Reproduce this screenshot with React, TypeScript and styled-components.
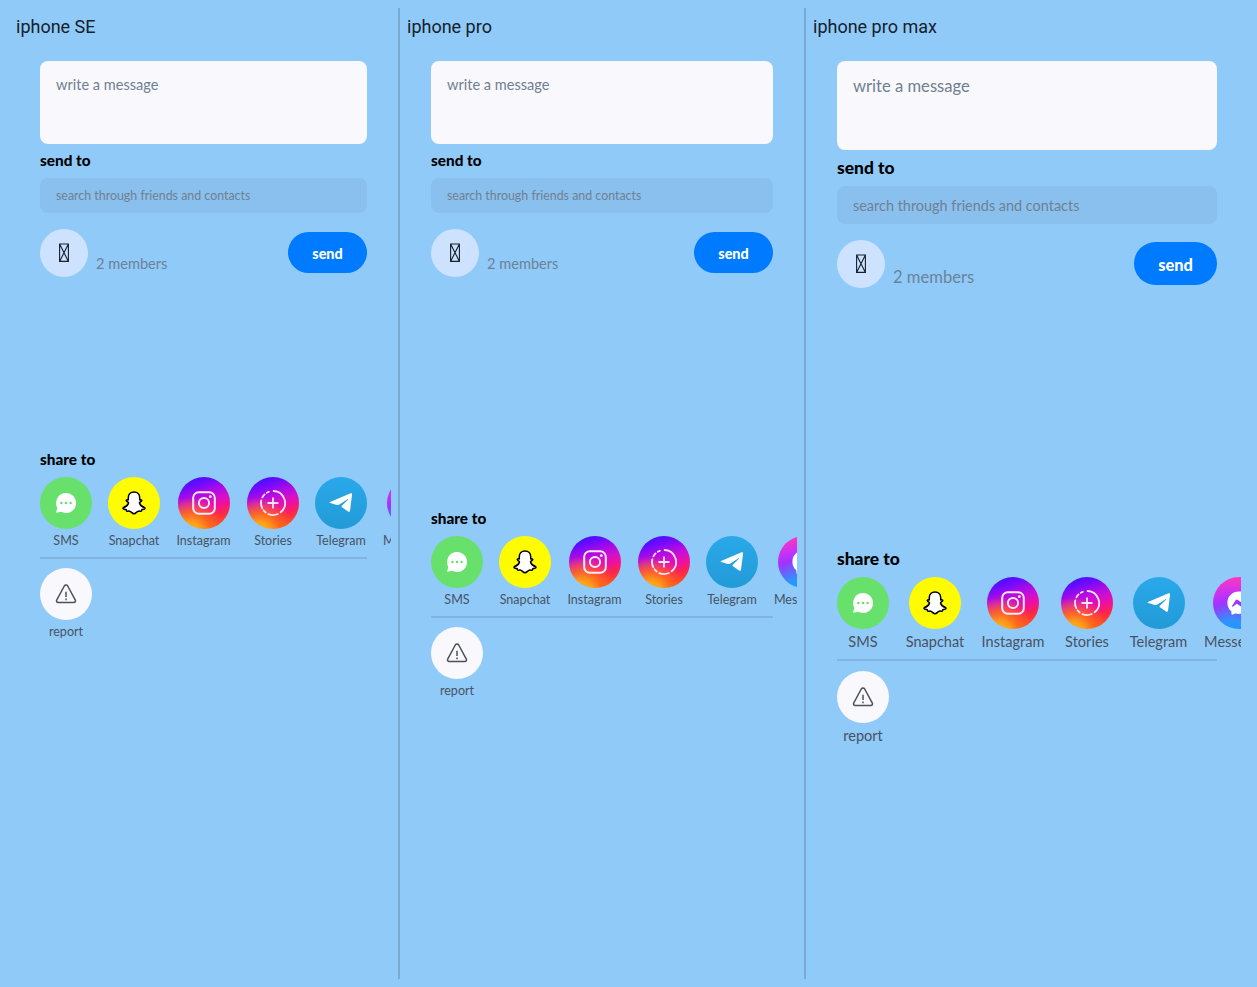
import React from 'react';
import styled, { createGlobalStyle, ThemeProvider } from 'styled-components';
import { FaFacebookMessenger } from 'react-icons/fa6';

interface Scale {
  name: string;
  frame: number;
  shareGap: number;
  messageHeight: number;
  titleHeight: number;
  searchHeight: number;
  buttonWidth: number;
  buttonHeight: number;
  memberDrop: number;
  textSize: number;
  titleSize: number;
  searchSize: number;
  memberSize: number;
  sendSize: number;
  labelSize: number;
  labelHeight: number;
  dividerGap: number;
  itemWidths: number[];
}

const small = {
  messageHeight: 83,
  titleHeight: 34,
  searchHeight: 34.67,
  buttonWidth: 79,
  buttonHeight: 41,
  memberDrop: 3,
  textSize: 14.55,
  titleSize: 15.3,
  searchSize: 12.4,
  memberSize: 14.6,
  sendSize: 14.4,
  labelSize: 12.55,
  labelHeight: 22,
  dividerGap: 9,
  itemWidths: [52, 52, 55, 52, 52, 60],
};

const phones: Scale[] = [
  { ...small, name: 'iphone SE', frame: 375, shareGap: 166 },
  { ...small, name: 'iphone pro', frame: 390, shareGap: 225 },
  {
    name: 'iphone pro max',
    frame: 428,
    shareGap: 253,
    messageHeight: 89,
    titleHeight: 36,
    searchHeight: 37.67,
    buttonWidth: 83,
    buttonHeight: 43,
    memberDrop: 1,
    textSize: 16.6,
    titleSize: 17.4,
    searchSize: 14.44,
    memberSize: 16.6,
    sendSize: 16.4,
    labelSize: 14.55,
    labelHeight: 24,
    dividerGap: 10,
    itemWidths: [52, 60, 64, 52, 59, 70],
  },
];

const GlobalStyle = createGlobalStyle`
  *, *::before, *::after { box-sizing: border-box; }
  body { margin: 8px; background: #90caf9; }
  h2, h3, p { margin: 0; }
`;

const Board = styled.main`
  display: flex;
  height: 971px;
`;

const Column = styled.section`
  flex: none;
  padding: 0 7px;
  border-right: 2px solid #79aad2;
  &:first-child { padding-left: 8px; }
  &:last-child { border-right: 0; }
`;

const DeviceName = styled.h2`
  padding-top: 8px;
  height: 45px;
  font: 400 18px/22px Roboto, sans-serif;
  color: #14202b;
`;

const Screen = styled.div`
  width: ${({ theme }) => theme.frame}px;
  padding: 8px 24px 0;
  overflow: hidden;
  font-family: Lato, sans-serif;
`;

const Message = styled.textarea`
  display: block;
  width: 100%;
  height: ${({ theme }) => theme.messageHeight}px;
  padding: 14px 16px;
  border: 0;
  border-radius: 8px;
  resize: none;
  background: #f8f8fd;
  font: 400 ${({ theme }) => theme.textSize}px/1.35 Lato, sans-serif;
  &::placeholder { color: #708090; }
`;

const Title = styled.h3`
  height: ${({ theme }) => theme.titleHeight}px;
  line-height: ${({ theme }) => theme.titleHeight - 1}px;
  font-size: ${({ theme }) => theme.titleSize}px;
  font-weight: 900;
  color: #000;
`;

const Search = styled.input`
  display: block;
  width: 100%;
  height: ${({ theme }) => theme.searchHeight}px;
  padding: 1px 16px 0;
  border: 0;
  border-radius: 8px;
  background: #8ac0ed;
  font: 400 ${({ theme }) => theme.searchSize}px Lato, sans-serif;
  &::placeholder { color: #6f8092; }
`;

const Recipient = styled.div`
  display: flex;
  align-items: center;
  height: 48px;
  margin-top: 16px;
`;

const Avatar = styled.div`
  display: grid;
  place-items: center;
  width: 48px;
  height: 48px;
  border-radius: 50%;
  background: #cce2ff;
`;

const Members = styled.p`
  align-self: flex-end;
  margin: 0 auto ${({ theme }) => theme.memberDrop}px 8px;
  font-size: ${({ theme }) => theme.memberSize}px;
  line-height: 20px;
  color: #6c8297;
`;

const SendButton = styled.button`
  width: ${({ theme }) => theme.buttonWidth}px;
  height: ${({ theme }) => theme.buttonHeight}px;
  padding: 1px 0 0;
  border: 0;
  border-radius: 24px;
  background: #007aff;
  color: #fff;
  font: 900 ${({ theme }) => theme.sendSize}px Lato, sans-serif;
`;

const Share = styled.div`
  margin-top: ${({ theme }) => theme.shareGap}px;
`;

const Row = styled.div`
  display: flex;
  gap: 16px;
`;

const Item = styled.div<{ $width: number }>`
  display: flex;
  flex: none;
  flex-direction: column;
  align-items: center;
  width: ${({ $width }) => $width}px;
`;

const Circle = styled.div<{ $fill: string }>`
  display: grid;
  place-items: center;
  width: 52px;
  height: 52px;
  border-radius: 50%;
  background: ${({ $fill }) => $fill};
  color: #fff;
`;

const Label = styled.span`
  height: ${({ theme }) => theme.labelHeight}px;
  line-height: ${({ theme }) => theme.labelHeight + 2}px;
  font-size: ${({ theme }) => theme.labelSize}px;
  white-space: nowrap;
  color: #48535f;
`;

const Divider = styled.hr`
  height: 2px;
  margin: 6px 0 ${({ theme }) => theme.dividerGap}px;
  border: 0;
  background: #81b5e0;
`;

const instagramFill =
  'radial-gradient(circle at 24% 108%, #ffb81c 0%, #ffa01a 16%, rgba(255, 110, 25, 0.85) 30%, rgba(255, 60, 50, 0) 52%), linear-gradient(162deg, #3f10ff 6%, #6b0bff 20%, #a80ae6 34%, #cf0fd2 47%, #f0109c 60%, #fb2350 72%, #ff4a22 88%)';

const MissingGlyph = () => (
  <svg width="10" height="20" viewBox="0 0 10 20" fill="none" stroke="#15202b" strokeWidth="1.1">
    <path d="M.6 1h8.8v17.4H.6zM.6 1l8.8 17.4M9.4 1 .6 18.4" />
  </svg>
);

const SmsIcon = () => (
  <svg width="20" height="20" viewBox="0 0 20 20">
    <path fill="#fff" d="M10 0a10 10 0 1 1-4.7 18.8L0 19.7l1.3-4.8A10 10 0 0 1 10 0Z" />
    <g fill="#67e16c">
      <circle cx="5.4" cy="10" r="1.25" />
      <circle cx="10" cy="10" r="1.25" />
      <circle cx="14.6" cy="10" r="1.25" />
    </g>
  </svg>
);

const SnapchatIcon = () => (
  <svg width="24" height="24" viewBox="0 0 24 24">
    <path
      fill="#fff"
      stroke="#000"
      strokeWidth="1.5"
      strokeLinejoin="round"
      d="M12 .9c3.5 0 5.7 2.4 5.7 5.7v2.2c.6.3 1.3-.2 1.8.2.7.7-.2 1.5-1.5 2.1-.6.3-.6.8-.4 1.3.9 2.2 2.6 3.6 5 4.2.6.2.5.8 0 1.2-.7.5-1.7.6-2.7.8-.4.3-.2 1.2-.6 1.5-.7.3-1.8-.2-3.1.1-1.5.4-2.3 2.5-4.2 2.5s-2.7-2.1-4.2-2.5c-1.300-.3-2.400.2-3.100-.1-.4-.3-.2-1.200-.6-1.500-1-.2-2-.3-2.700-.8-.5-.4-.6-1 0-1.200 2.400-.6 4.100-2 5-4.200.2-.5.2-1-.4-1.300-1.300-.6-2.200-1.400-1.500-2.100.5-.4 1.200.1 1.800-.2V6.600C6.300 3.300 8.500.9 12 .9Z"
    />
  </svg>
);

const InstagramIcon = () => (
  <svg width="24" height="24" viewBox="0 0 24 24" fill="none" stroke="#ffe9fb" strokeWidth="2">
    <rect x="1.2" y="1.2" width="21.6" height="21.6" rx="5.6" />
    <circle cx="12" cy="12" r="5.1" />
    <circle cx="18.3" cy="5.7" r="1.4" fill="#ffe9fb" stroke="none" />
  </svg>
);

const StoriesIcon = () => (
  <svg width="26" height="26" viewBox="0 0 26 26" fill="none" stroke="#ffe3fa" strokeWidth="1.8" strokeLinecap="round">
    <path d="M13.6 1A12 12 0 0 1 20.6 22.300" />
    <path d="M17.8 24A12 12 0 0 1 8.400 24.100" />
    <path d="M5.700 22.500A12 12 0 0 1 3.500 20.300" />
    <path d="M2.200 18.200A12 12 0 0 1 1.300 10.400" />
    <path d="M2.400 7.400A12 12 0 0 1 4.600 4.400" />
    <path d="M6.800 2.700A12 12 0 0 1 8.800 1.800" />
    <path d="M13 8.200v9.600M8.200 13h9.600" />
  </svg>
);

const TelegramIcon = () => (
  <svg width="24" height="21" viewBox="0 0 26 22">
    <path
      fill="#fff"
      d="M1.100 10.400 23.400 1.100c1-.4 1.700.2 1.600 1.300l-2.200 17.300c-.2 1.400-1.100 1.700-2.200 1l-6.200-4.200c-1.100-.7-1.100-1.400-.2-2.300l6.300-6.300c.5-.6.1-.9-.5-.5l-8.700 5.900c-.9.6-1.800.7-2.900.3l-6.900-2c-1.100-.3-1.200-.8-.4-1.200Z"
    />
  </svg>
);

const WarningIcon = () => (
  <svg width="22" height="20" viewBox="0 0 22 20" fill="none" stroke="#4e5159" strokeWidth="1.5">
    <path strokeLinejoin="round" d="M9.300 2a2 2 0 0 1 3.400 0l7.500 13.800c.8 1.400.1 2.700-1.500 2.700H3.300c-1.600 0-2.300-1.300-1.500-2.700Z" />
    <path d="M11 7.800v5.100M11 14.600v1.700" />
  </svg>
);

const targets = [
  { label: 'SMS', fill: '#67e16c', icon: <SmsIcon /> },
  { label: 'Snapchat', fill: '#fffc00', icon: <SnapchatIcon /> },
  { label: 'Instagram', fill: instagramFill, icon: <InstagramIcon /> },
  { label: 'Stories', fill: instagramFill, icon: <StoriesIcon /> },
  { label: 'Telegram', fill: 'linear-gradient(#2aa8ea, #229bd7)', icon: <TelegramIcon /> },
  {
    label: 'Messenger',
    fill: 'radial-gradient(circle at 35% 108%, #159dff 0%, #2f92ff 20%, #a033ff 48%, #c633f5 62%, #ff35c0 84%)',
    icon: <FaFacebookMessenger size={24} />,
  },
];

const Phone = ({ scale }: { scale: Scale }) => (
  <ThemeProvider theme={scale}>
    <Column>
      <DeviceName>{scale.name}</DeviceName>
      <Screen>
        <Message placeholder="write a message" />
        <Title>send to</Title>
        <Search placeholder="search through friends and contacts" />
        <Recipient>
          <Avatar><MissingGlyph /></Avatar>
          <Members>2 members</Members>
          <SendButton>send</SendButton>
        </Recipient>
        <Share>
          <Title>share to</Title>
          <Row>
            {targets.map((target, index) => (
              <Item key={target.label} $width={scale.itemWidths[index]}>
                <Circle $fill={target.fill}>{target.icon}</Circle>
                <Label>{target.label}</Label>
              </Item>
            ))}
          </Row>
          <Divider />
          <Item $width={52}>
            <Circle $fill="#f8f8fd"><WarningIcon /></Circle>
            <Label>report</Label>
          </Item>
        </Share>
      </Screen>
    </Column>
  </ThemeProvider>
);

export default function App() {
  return (
    <>
      <GlobalStyle />
      <Board>
        {phones.map((scale) => (
          <Phone key={scale.name} scale={scale} />
        ))}
      </Board>
    </>
  );
}
